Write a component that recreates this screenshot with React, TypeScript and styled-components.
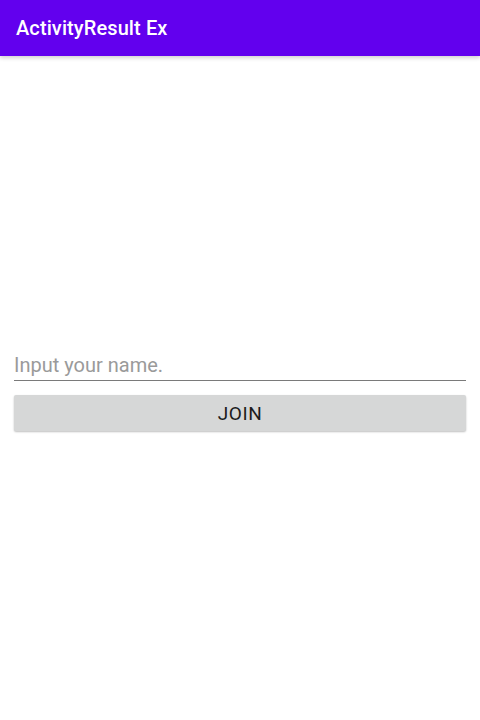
import React from "react";
import styled, { createGlobalStyle } from "styled-components";

const Global = createGlobalStyle`
  html, body { margin: 0; padding: 0; background: #fff; }
  body { font-family: Roboto, "Noto Sans", sans-serif; }
  * { box-sizing: border-box; }
`;

const Screen = styled.div`
  width: 480px;
  height: 720px;
  display: flex;
  flex-direction: column;
  background: #ffffff;
`;

const AppBar = styled.header`
  height: 56px;
  flex: none;
  background: #6200ee;
  display: flex;
  align-items: center;
  padding: 0 16px;
  box-shadow: 0 2px 4px rgba(0, 0, 0, 0.18);
  position: relative;
  z-index: 1;
`;

const Title = styled.h1`
  margin: 0;
  color: #ffffff;
  font-family: Roboto, sans-serif;
  font-weight: 500;
  font-size: 20px;
  letter-spacing: 0.1px;
`;

const Body = styled.main`
  flex: 1;
  display: flex;
  flex-direction: column;
  justify-content: center;
  padding: 0 14px;
`;

const Field = styled.input`
  width: 100%;
  height: 36px;
  border: none;
  border-bottom: 1px solid #7a7a7a;
  outline: none;
  padding: 8px 0 3px 0;
  line-height: 24px;
  font-family: Roboto, sans-serif;
  font-size: 20px;
  color: #222;
  background: transparent;
  &::placeholder {
    color: #9a9a9a;
  }
`;

const Button = styled.button`
  margin-top: 14px;
  width: 100%;
  height: 36px;
  border: none;
  border-radius: 2px;
  background: #d6d7d7;
  box-shadow: 0 1px 2px rgba(0, 0, 0, 0.25);
  font-family: Roboto, sans-serif;
  font-weight: 400;
  font-size: 19px;
  letter-spacing: 0.6px;
  color: #1c1c1c;
  text-transform: uppercase;
`;

export default function App() {
  return (
    <>
      <Global />
      <Screen>
        <AppBar>
          <Title>ActivityResult Ex</Title>
        </AppBar>
        <Body>
          <Field placeholder="Input your name." />
          <Button>Join</Button>
        </Body>
      </Screen>
    </>
  );
}
